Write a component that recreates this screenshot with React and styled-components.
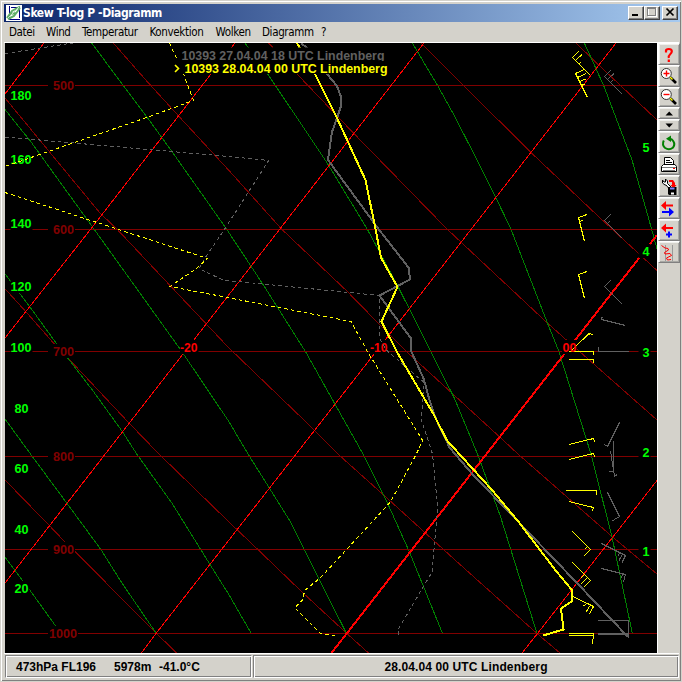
import styled, { createGlobalStyle } from 'styled-components';

const GlobalStyle = createGlobalStyle`
    * {
        box-sizing: border-box;
    }

    body {
        margin: 0;
        overflow: hidden;
        background: #d4d2cb;
    }
`;

const isobars = [
    { y: 85.5, label: '500' },
    { y: 229.5, label: '600' },
    { y: 351.5, label: '700' },
    { y: 456.5, label: '800' },
    { y: 549.5, label: '900' },
    { y: 633.5, label: '1000' },
];

const flightLevels = [
    ['180', 100],
    ['160', 164],
    ['140', 228],
    ['120', 291],
    ['100', 352],
    ['80', 413],
    ['60', 473],
    ['40', 534],
    ['20', 593],
];

const kilometres = [
    ['5', 152],
    ['4', 256],
    ['3', 357],
    ['2', 457],
    ['1', 556],
];

const isotherms = [
    '5,94 44,43',
    '5,338 92,227.5 211,74 235,43',
    '5,583 183,354 424,43',
    '141.5,653 156,633.5 373,355.5 616,43',
    '522,653 537.5,633.5 657,480.5',
];

const dryAdiabats = [
    '5,98 100,213 117.3,229.5 228,347 314.3,430 339,455 390.3,501 455,560 537,633.5 560,653',
    '113.3,43 146.7,81 178.3,115.7 229,170.5 281.5,229 346.3,290.5 381,326 407,352 454,395 499.7,437 518,454 612,536.5 657,574',
    '268.7,43 297,74 353.7,133.3 447,229 547,322.7 567,340.5 581.3,353 657,420',
    '421.3,43 454,76 531,152.5 595.3,213.5 612,229 637,252 657,270.5',
    '576,43 598.7,65 623.7,88.5 657,120',
    '5,288.7 25.7,311.5 55,344.7 71.7,362 129,423 159,454 229,522 257,548.7 302,592 346.3,633 368.5,653',
    '5,480 49.3,525.5 65.7,542.7 75,551.5 156,633 176.7,653',
];

const moistAdiabats = [
    '5,109.5 30.7,141.5 94.3,229.5 179.3,348 183.7,354.3 228.5,421 248,454 269.3,488 290.3,521.5 318.7,578.7 346.3,633',
    '91.7,43 123.3,85.7 146.7,116.7 173.3,153.5 226.5,229 263.7,285.5 305.7,352 363,454 387,502 408.7,550.3 423.7,587 442.3,633',
    '245,43 267.7,74 327,162.7 367,228.7 397,284.5 431,352 454.5,398.5 477.5,454 500.3,516 537,633.5',
    '412.3,43 437.7,85.7 454.5,116 477,160 495.7,197.5 510.5,228 547.7,323.7 558.7,351 591,454 612,537 632.3,633',
    '584.3,43 603.7,85.7 632,160 651.3,228 657,249',
    '5,274 30,307 57.3,344.7 67.7,358 92.7,390.5 122.3,431.5 136.7,454 172.3,503.7 210,564.5 228.5,594 251,633',
    '5,419 30.5,454 66.7,503 101,549.7 121.7,582.7 156,633',
    '5,557 23.3,581.5 29.3,589.3 56,626.5',
];

const soundings = {
    previous: {
        temp: '301,43 307,48 327,74 337,86 341,97 341,106 337,118 332,132 328,160 378.5,229 408.7,267.7 410,279.5 379.5,295.5 410.7,338 411.5,352 423.7,378.7 429.5,400 434.5,415.5 442,432 449.7,447.7 472,473.7 513.7,517 577,583 628,637',
        dew: [
            '5,53.5 76,42.5',
            '5,137 229,156.5 268.7,160.5 226,227 206.7,255.5 199,268.5 220,278.7 227,280.5 379.5,295.5 379.5,338.5 386,349.7 413.7,373.7 423.7,382 421.5,420.5 432.5,454 437.7,507 432,572 398,629.7 398.7,635',
        ],
    },
    current: {
        temp: '297,43 315,74 337,118 365.5,180 375.5,229 381,257.7 397.5,287 381.5,321.5 397,352 434,415 447,440.5 457,451.5 492,490 518.7,522 555.3,570 571.5,589.5 571.5,601.5 561,608.7 563.5,629.5 543,635.5',
        dew: [
            '169.5,43 175,55 183.5,74 193.5,100.5 146.7,117.5 5,166.5',
            '5,192.5 117,229 207.5,258.5 196.5,268.5 170,286.5 227.5,297.5 351,321.5 368.7,353.7 422.7,440.5 415.5,455.7 390.5,502 320.5,577.7 304.5,590.5 303,599.7 294.7,607.7 320.5,633.5 335,635.5',
        ],
    },
};

const currentBarbs =
    'M590.5 75.5L572.5 57.5L579 51M575.5 60.5L582 54.5M578.5 64L581 62' +
    'M587.5 97.5L575.5 73.5L585 69M577.5 77.5L586 73.5M579.5 81.5L585.5 79M581.5 85.5L584.5 84' +
    'M584.5 241.5L578.5 217.5L587 214.5M579.5 221.5L583 220' +
    'M584.5 298.5L578.5 274.5L587 271.5' +
    'M571 351L589 333.5L593 334.5M589 333.5V335' +
    'M569 351.5H593.5V355M569 359.5H593.5V363' +
    'M569 444.5L593.5 438.5L594.5 442M569 459.5L593.5 453.5L594.5 457' +
    'M566 490.5H596.5V495M569 501.5L593.5 507.5L592.5 511' +
    'M572 531L590.5 549.5L584 556M587.5 546.5L585 549' +
    'M572 562L590.5 580.5L584 587M587.5 577.5L581 584M584.5 574.5L580.5 578.5' +
    'M571 595.5L593.5 606.5L589.5 614M590.5 605L586 612M587 603.5L583.5 606' +
    'M569 633.5H593.5L592.5 644M569 635.5H593.5';

const previousBarbs =
    'M622.5 94.5L604.5 76.5L610.5 70.5M607.5 79.5L614 73.5M610.5 82.5L613 80' +
    'M622.5 238.5L604.5 220.5L610.5 214.5M607.5 223.5L610 221' +
    'M622.5 304.5L604.5 286.5L610.5 280.5' +
    'M625.5 325.5L601.5 319.5V316.5M601.5 317.5H603' +
    'M598.5 347V351.5' +
    'M619.5 422.5L607.5 446.5L604.5 444.5' +
    'M613.5 441V471.5H609M610.5 451L614.5 476.5L617 474.5' +
    'M607.5 492.5L619.5 516.5L612 521' +
    'M601.5 543.5L625.5 555.5L622 562.5M622.5 554L619 560.5M619.5 552.5L618 556' +
    'M601.5 568.5L625.5 574.5L623.5 582M622.5 573.5L621.5 578' +
    'M598 620.5H628.5V638';

const toolItems = ['help', 'zoomIn', 'zoomOut', 'up', 'down', 'refresh', 'print', 'settings', 'swap', 'add', 'curve'];
const toolHeights = { zoomOut: 20, up: 12, down: 12 };

const toolIcons = {
    help: (
        <path d='M8 9.5V7.5Q8 6 10.8 6T13.8 8.2Q13.8 10 12 11.5T10.8 15M10.8 16.5V19' fill='none' stroke='#ff0000' strokeWidth='2.2' />
    ),
    zoomIn: (
        <>
            <path d='M12.5 12.5L18 18' stroke='#000' strokeWidth='2.6' />
            <path d='M12 12L14.5 14.5' stroke='#ffff00' strokeWidth='1.4' />
            <circle cx='8.3' cy='8.5' r='5' fill='#fff' stroke='#333' />
            <path d='M5.5 8.5H11.5M8.5 5.5V11.5' stroke='#ff0000' strokeWidth='1.4' />
        </>
    ),
    zoomOut: (
        <>
            <path d='M12.5 11.5L18 17' stroke='#000' strokeWidth='2.6' />
            <path d='M12 11L14.5 13.5' stroke='#ffff00' strokeWidth='1.4' />
            <circle cx='8.3' cy='7.5' r='5' fill='#fff' stroke='#333' />
            <path d='M5.5 7.5H11.5' stroke='#ff0000' strokeWidth='1.4' />
        </>
    ),
    up: <path d='M7.5 8.5H15L11.2 4.5Z' fill='#000' />,
    down: <path d='M7.5 4.5H15L11.2 8.5Z' fill='#000' />,
    refresh: (
        <>
            <path d='M5.8 9.5Q3.6 14 7.2 17Q11 19.5 14.8 16.8Q17.5 13.5 15.2 10Q14 8 11.5 7.8' fill='none' stroke='#008000' strokeWidth='2' />
            <path d='M8 7.8L13 4.5V11Z' fill='#008000' />
        </>
    ),
    print: (
        <>
            <path d='M6.5 12.5V4.5H12.5L15.5 7.5V12.5Z' fill='#fff' stroke='#000' />
            <path d='M8 7.5H12M8 9.5H14' stroke='#000' />
            <path d='M5.5 11.5H17L18.5 13.5V18.5H3.5V13.5Z' fill='#fff' stroke='#000' />
            <path d='M4 14.5H18M5 17.5H17' stroke='#777' />
            <path d='M15 15.5H17' stroke='#ff0000' />
        </>
    ),
    settings: (
        <>
            <path d='M4.5 5V8L7 10H8L14 17L16 15L9.5 8.5V6L7.5 4V7H6Z' fill='#fff' stroke='#000' />
            <path d='M11 5H15L17 8V10H18.5L15.5 13.5L12.5 10H14V7H11Z' fill='#ff0000' />
            <path d='M10 12H18.5V20H11L10 19Z' fill='#000' />
            <path d='M12 13.5H16.5' stroke='#8080ff' strokeWidth='2' />
            <path d='M13 18.5H16' stroke='#fff' strokeWidth='2' />
        </>
    ),
    swap: (
        <>
            <path d='M3 8.5L8 4V7.5H15V9.5H8V13Z' fill='#ff0000' />
            <path d='M16 15L11 10.5V14H4V16H11V19.5Z' fill='#0000ff' />
        </>
    ),
    add: (
        <>
            <path d='M3 9L8 4.5V8H15V10H8V13.5Z' fill='#ff0000' />
            <path d='M8 15.5H14M11 12.5V18.5' stroke='#0000ff' strokeWidth='2' />
        </>
    ),
    curve: (
        <>
            <path d='M7.5 4V20M14.5 4V20' stroke='#999' />
            <path d='M3.5 4.5L7 7L10 7.5L10.5 9L6.5 11.5L7 13L12 12.5L13.5 14.5L8.5 17L9.5 19L13 18.5' fill='none' stroke='#ff0000' />
        </>
    ),
};

const ChartLabel = ({ x, y, width, pad = 0, color, children }) => (
    <g>
        <rect x={x - pad} y={y - 12} width={width + pad + 1} height='14' fill='#000' />
        <ChartText x={x} y={y} textLength={width} lengthAdjust='spacingAndGlyphs' fill={color}>
            {children}
        </ChartText>
    </g>
);

const Sounding = ({ data, color, children }) => (
    <g fill='none' stroke={color}>
        {data.dew.map((points) => (
            <polyline key={points} points={points} strokeDasharray='3.6 3' />
        ))}
        <polyline points={data.temp} strokeWidth='2' />
        {children}
    </g>
);

const Chart = () => (
    <Plot viewBox='5 43 652 610'>
        <g fill='none' shapeRendering='crispEdges'>
            {dryAdiabats.map((points) => (
                <polyline key={points} points={points} stroke='#800000' />
            ))}
            {moistAdiabats.map((points) => (
                <polyline key={points} points={points} stroke='#008000' />
            ))}
            {isobars.map(({ y }) => (
                <line key={y} x1='5' x2='657' y1={y} y2={y} stroke='#800000' />
            ))}
            {isotherms.map((points) => (
                <polyline key={points} points={points} stroke='#ff0000' />
            ))}
            <line x1='331.5' y1='653' x2='657' y2='235' stroke='#ff0000' strokeWidth='2' />
        </g>
        {isobars.map(({ y, label }) => (
            <ChartLabel
                key={label}
                x={label.length > 3 ? 49 : 53}
                y={y + 4.5}
                width={label.length > 3 ? 28 : 21}
                pad={label.length > 3 ? 1 : 5}
                color='#800000'
            >
                {label}
            </ChartLabel>
        ))}
        {flightLevels.map(([label, y]) => (
            <ChartLabel key={label} x={label.length > 2 ? 10.5 : 14.5} y={y} width={label.length * 7} color='#00ff00'>
                {label}
            </ChartLabel>
        ))}
        {kilometres.map(([label, y]) => (
            <ChartLabel key={label} x={642.5} y={y} width={7} pad={4} color='#00ff00'>
                {label}
            </ChartLabel>
        ))}
        <ChartLabel x={180} y={352} width={17.5} color='#ff0000'>-20</ChartLabel>
        <ChartLabel x={370} y={352} width={17.5} color='#ff0000'>-10</ChartLabel>
        <rect x='562' y='340' width='15' height='14' fill='#000' />
        <g shapeRendering='crispEdges'>
            <Sounding data={soundings.previous} color='#606060'>
                <path d={previousBarbs} />
                <path d='M598 351.5H629' />
                <path d='M598 634H629' strokeWidth='2' />
            </Sounding>
            <Sounding data={soundings.current} color='#ffff00'>
                <path d={currentBarbs} />
            </Sounding>
        </g>
        {/* the freezing level label stays readable over the barb shaft */}
        <ChartText x='562.5' y='352' textLength='14' lengthAdjust='spacingAndGlyphs' fill='#ff0000'>
            00
        </ChartText>
        <ChartLabel x={181.5} y={59.5} width={203} color='#606060'>10393 27.04.04 18 UTC Lindenberg</ChartLabel>
        <rect x='173' y='61' width='216' height='13' fill='#000' />
        <path d='M175 65L178.5 68.5L175 72' fill='none' stroke='#ffff00' strokeWidth='1.6' />
        <ChartText x='184.5' y='72.5' textLength='203' lengthAdjust='spacingAndGlyphs' fill='#ffff00'>
            10393 28.04.04 00 UTC Lindenberg
        </ChartText>
    </Plot>
);

const TitleBar = () => (
    <Title>
        <AppIcon viewBox='0 0 16 16'>
            <rect width='16' height='16' fill='#fff' />
            <path d='M3.5 1V14.5H14M5 2.5H13.5V13' fill='none' stroke='#000080' />
            <path d='M1 13L6 6L14 1.5M2 14L8 11L14 3M4 9L10 8' fill='none' stroke='#5fae68' strokeWidth='2' />
            <path d='M2 13L13 2' stroke='#c5e6c8' />
        </AppIcon>
        <TitleText>Skew T-log P -Diagramm</TitleText>
        <WindowButton>
            <svg width='12' height='10' shapeRendering='crispEdges'>
                <path d='M2 8H8' stroke='#000' strokeWidth='2' />
            </svg>
        </WindowButton>
        <WindowButton>
            <svg width='12' height='10' shapeRendering='crispEdges'>
                <path d='M2.5 1.5H10.5V9.5H2.5Z' fill='none' stroke='#fff' />
                <path d='M1.5 .5H9.5V8.5H1.5ZM1.5 1.5H9.5' fill='none' stroke='#808080' />
            </svg>
        </WindowButton>
        <WindowButton $gap>
            <svg width='12' height='10'>
                <path d='M2.5 1.5L9.5 8.5M9.5 1.5L2.5 8.5' stroke='#000' strokeWidth='1.7' />
            </svg>
        </WindowButton>
    </Title>
);

const App = () => {
    return (
        <Window>
            <GlobalStyle />
            <TitleBar />
            <MenuBar>
                <MenuItem $width={37}>Datei</MenuItem>
                <MenuItem $width={36}>Wind</MenuItem>
                <MenuItem $width={67.5}>Temperatur</MenuItem>
                <MenuItem $width={66}>Konvektion</MenuItem>
                <MenuItem $width={46.5}>Wolken</MenuItem>
                <MenuItem $width={59}>Diagramm</MenuItem>
                <MenuItem $width={12}>?</MenuItem>
            </MenuBar>
            <Workspace>
                <Chart />
                <Toolbar>
                    {toolItems.map((name) => {
                        const height = toolHeights[name] || 22;
                        return (
                            <ToolButton key={name} $height={height}>
                                <svg width='22' height={height} viewBox={`0 0 22 ${height}`}>
                                    {toolIcons[name]}
                                </svg>
                            </ToolButton>
                        );
                    })}
                </Toolbar>
            </Workspace>
            <StatusBar>
                <StatusPanel $width='247px'>
                    <StatusText $width={98}>473hPa FL196</StatusText>
                    <StatusText $width={45}>5978m</StatusText>
                    <StatusText>-41.0°C</StatusText>
                </StatusPanel>
                <StatusPanel $center>
                    <StatusText $spacing='0.12px'>28.04.04 00 UTC Lindenberg</StatusText>
                </StatusPanel>
            </StatusBar>
        </Window>
    );
};

const Window = styled.main`
    display: flex;
    flex-direction: column;
    width: 682px;
    height: 682px;
    padding: 2px 1px 1px 2px;
    border: 1px solid;
    border-color: #fff #808080 #fff #fff;
    background: #d4d2cb;
    color: #000;
    outline: 1px solid #d4d2cb;
    outline-offset: -1px;
    box-shadow: inset 1px 1px #fff, inset -1px -1px #808080;
`;

const Title = styled.header`
    display: flex;
    align-items: center;
    flex: none;
    height: 18px;
    margin: 1px 0 0 1px;
    padding: 0 2px;
    background: linear-gradient(90deg, #0a246a, #a6caf0);
`;

const AppIcon = styled.svg`
    width: 16px;
    height: 16px;
`;

const TitleText = styled.h1`
    flex: 1;
    margin: 0 0 0 1px;
    font: bold 12px/18px 'DejaVu Sans Condensed', 'DejaVu Sans', sans-serif;
    font-stretch: condensed;
    letter-spacing: -0.38px;
    white-space: nowrap;
    color: #fff;
`;

const WindowButton = styled.button`
    display: flex;
    width: 16px;
    height: 14px;
    margin-left: ${({ $gap }) => ($gap ? '2px' : 0)};
    padding: 0 1px;
    border: 1px solid;
    border-color: #fff #404040 #404040 #fff;
    background: #d4d2cb;
    box-shadow: inset -1px -1px #808080;
`;

const MenuBar = styled.nav`
    display: flex;
    flex: none;
    height: 20px;
    padding-left: 6px;
    font: 11.5px/20px 'DejaVu Sans Condensed', 'DejaVu Sans', sans-serif;
    font-stretch: condensed;
`;

const MenuItem = styled.div`
    width: ${({ $width }) => $width}px;
    letter-spacing: -0.35px;
    white-space: nowrap;
`;

const Workspace = styled.section`
    display: flex;
    flex: none;
    height: 611px;
    margin: 0 1px;
    padding-left: 1px;
    border-top: 1px solid #fff;
`;

const Plot = styled.svg`
    flex: none;
    width: 652px;
    height: 610px;
    background: #000;
`;

const ChartText = styled.text`
    font: bold 13px 'Liberation Sans', Arial, sans-serif;
    stroke: none;
`;

const Toolbar = styled.aside`
    display: flex;
    flex-direction: column;
    width: 23px;
    border-left: 1px solid #fff;
`;

const ToolButton = styled.button`
    display: flex;
    flex: none;
    width: 22px;
    height: ${({ $height }) => $height}px;
    padding: 0;
    border: 1px solid;
    border-color: #fff #808080 #808080 #fff;
    background: #d4d2cb;
    box-shadow: inset 1px 1px #f0f0ec, inset -1px -1px #a8a8a4;

    svg {
        flex: none;
        margin: -1px;
    }
`;

const StatusBar = styled.footer`
    display: flex;
    gap: 1px;
    height: 26px;
    margin: 0 1px;
    padding: 1px 0 1px 1px;
    border-top: 1px solid #fff;
`;

const StatusPanel = styled.div`
    display: flex;
    align-items: center;
    justify-content: ${({ $center }) => ($center ? 'center' : 'flex-start')};
    flex: ${({ $width }) => ($width ? `0 0 ${$width}` : 1)};
    padding: 1px 0 0;
    padding-left: ${({ $center }) => ($center ? 0 : '10px')};
    border: 1px solid;
    border-color: #808080 #fff #fff #808080;
    box-shadow: inset 1px 1px #fff, inset -1px -1px #808080;
`;

const StatusText = styled.span`
    width: ${({ $width }) => ($width ? `${$width}px` : 'auto')};
    font: bold 12px/16px 'Liberation Sans', Arial, sans-serif;
    letter-spacing: ${({ $spacing }) => $spacing || 'normal'};
    white-space: nowrap;
`;

export default App;
